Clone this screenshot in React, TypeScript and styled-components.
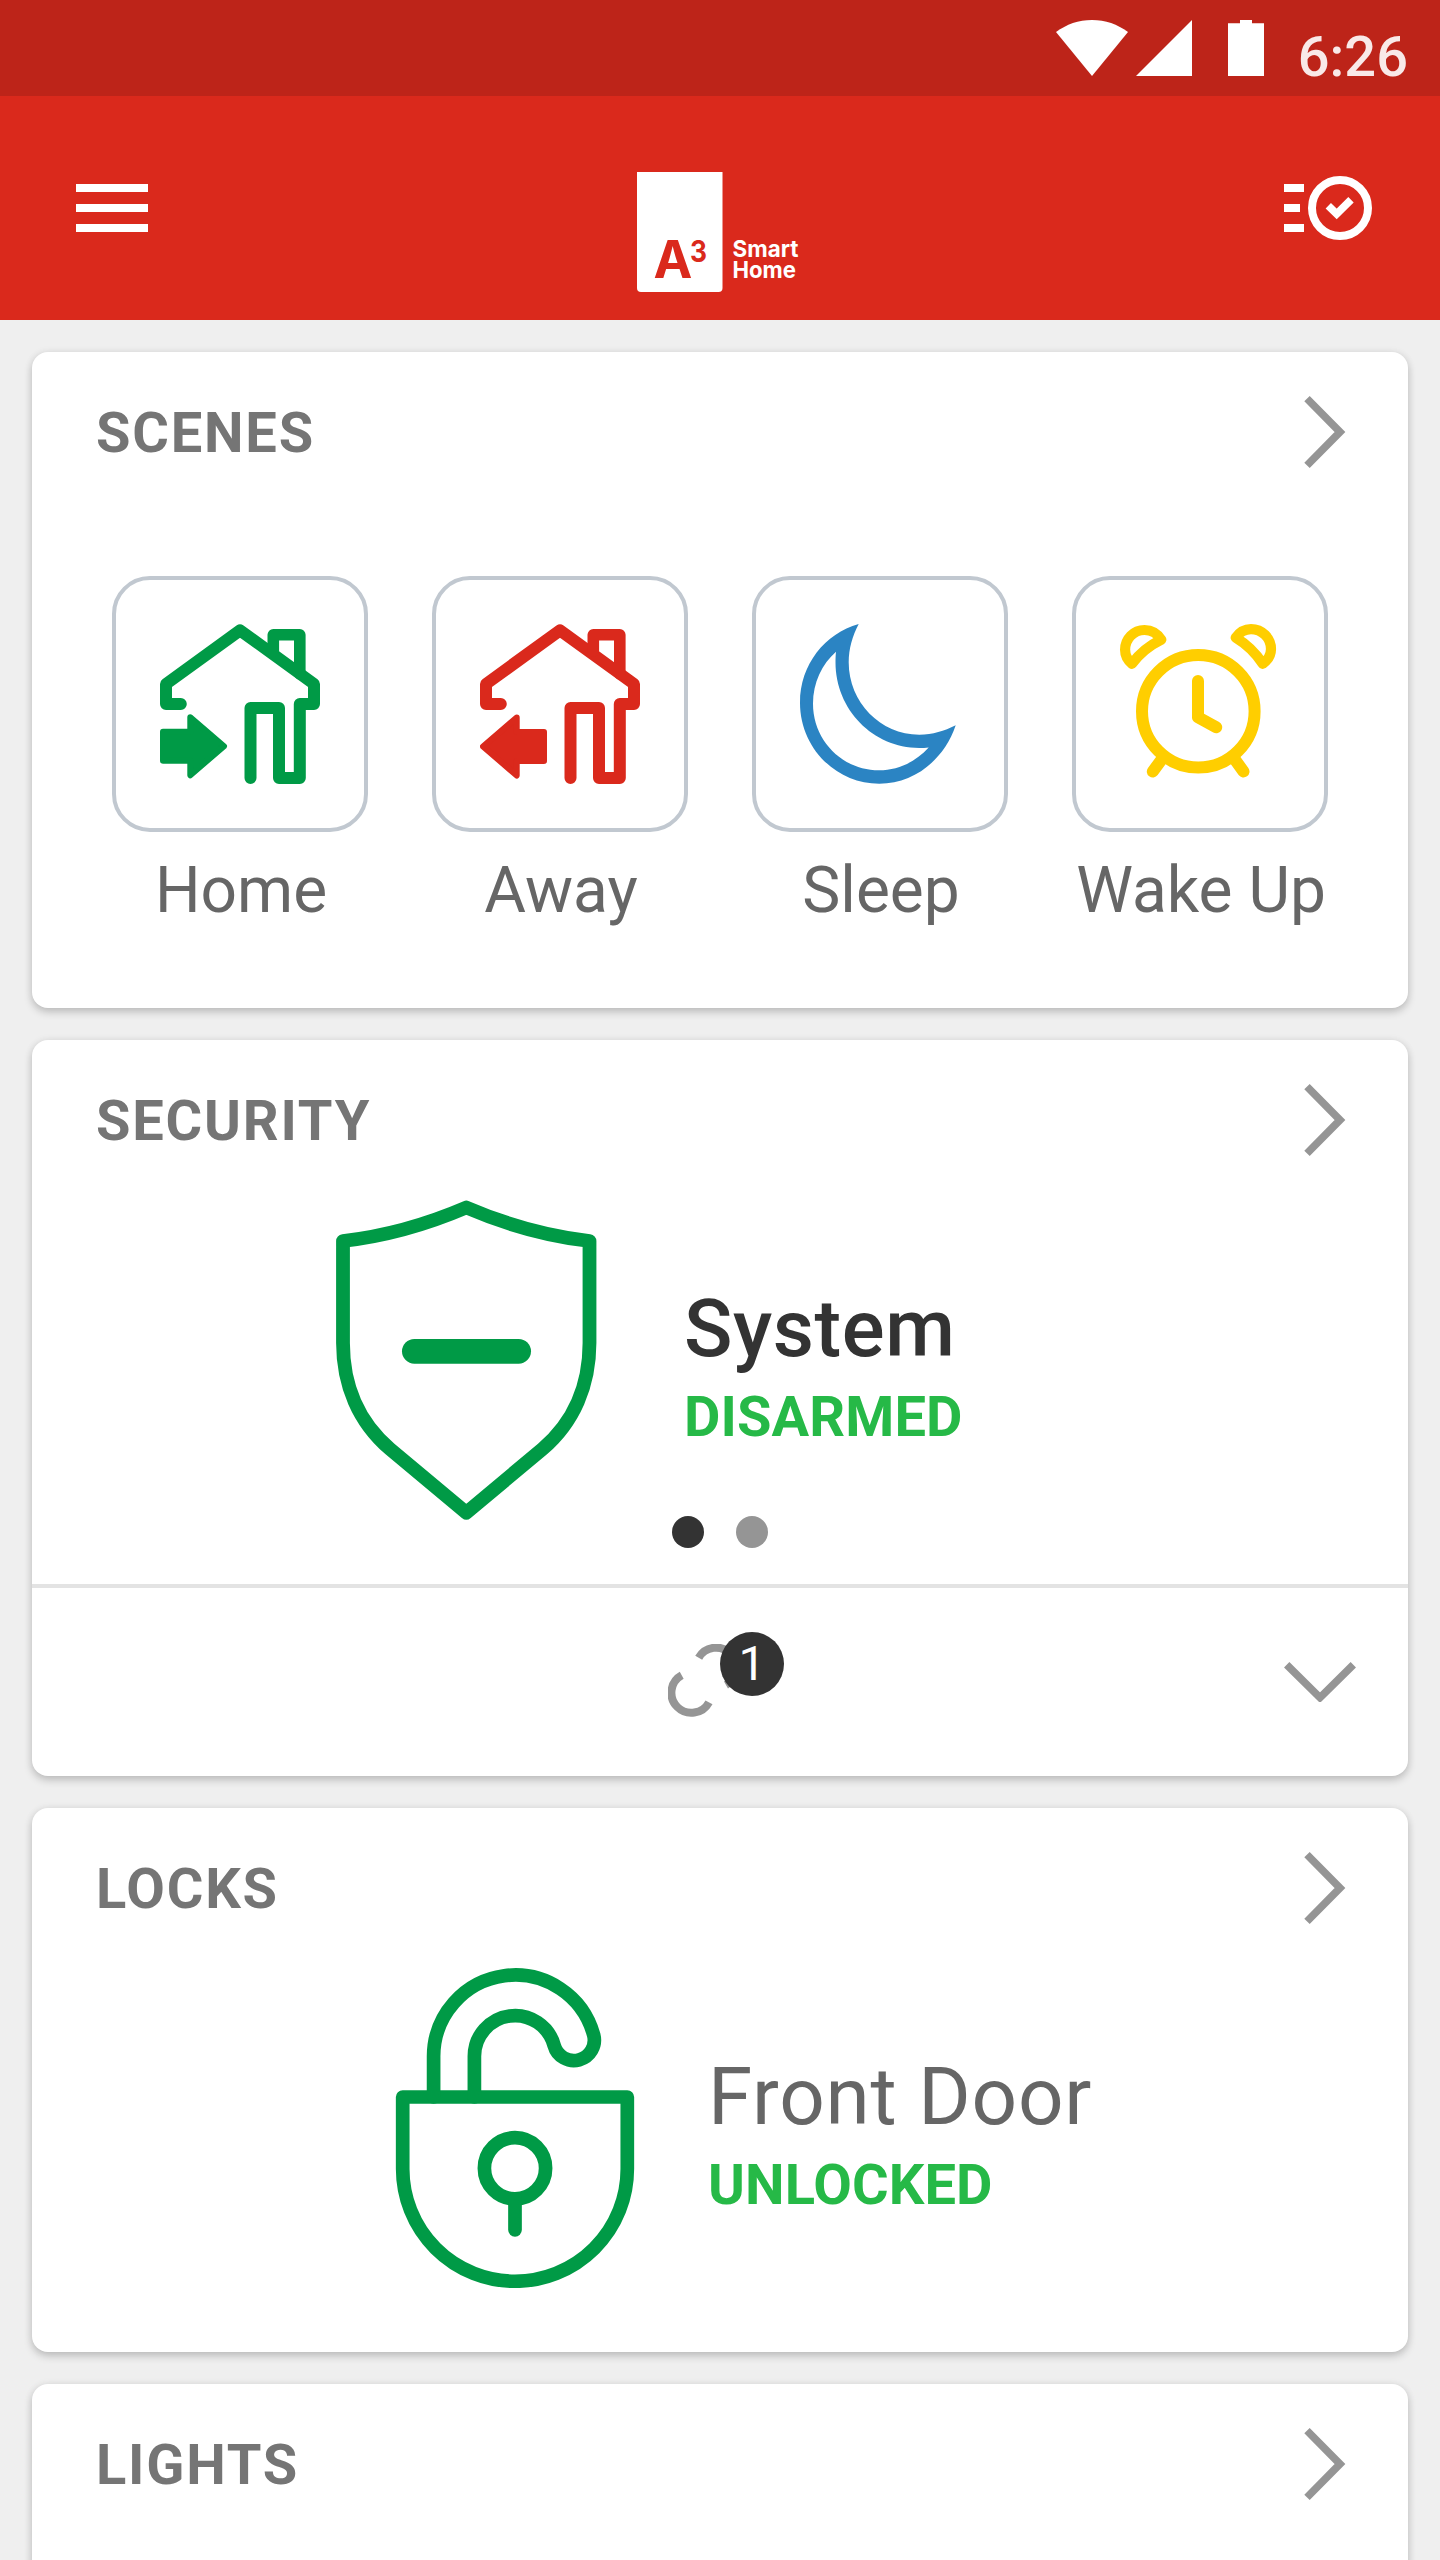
import React from 'react';
import styled, { createGlobalStyle } from 'styled-components';

const Global = createGlobalStyle`
  *, *::before, *::after { box-sizing: border-box; }
  html, body { margin: 0; padding: 0; background: #efefef; }
  svg { display: block; flex: none; }
`;

const Screen = styled.div`
  width: 1440px;
  height: 2560px;
  overflow: hidden;
  display: flex;
  flex-direction: column;
  background: #efefef;
  font-family: Roboto, 'Liberation Sans', sans-serif;
`;

const StatusBar = styled.div`
  flex: none;
  height: 96px;
  padding: 20px 32px 0 0;
  display: flex;
  justify-content: flex-end;
  align-items: flex-start;
  background: #bd2419;
`;

const Clock = styled.span`
  margin: 4px 0 0 34px;
  font-size: 56px;
  line-height: 66px;
  font-weight: 500;
  color: rgba(255, 255, 255, 0.9);
`;

const Header = styled.header`
  flex: none;
  height: 224px;
  padding: 0 68px 0 76px;
  display: flex;
  align-items: flex-start;
  background: #da291c;
`;

const HeaderButton = styled.button`
  margin: 80px 0 0;
  padding: 0;
  border: 0;
  background: none;
`;

const Brand = styled.div`
  margin: 76px auto 0 489px;
`;

const Content = styled.main`
  display: flex;
  flex-direction: column;
  gap: 32px;
  padding: 32px;
`;

const Card = styled.section<{ $height: number }>`
  flex: none;
  height: ${(p) => p.$height}px;
  display: flex;
  flex-direction: column;
  border-radius: 16px;
  background: #fff;
  box-shadow: 0 4px 8px rgba(0, 0, 0, 0.2), 0 0 8px rgba(0, 0, 0, 0.06);
`;

const CardHeader = styled.div`
  flex: none;
  height: 160px;
  padding: 0 60px 0 64px;
  display: flex;
  align-items: center;
  justify-content: space-between;
`;

const CardTitle = styled.h2`
  margin: 2px 0 0;
  font-size: 56px;
  line-height: 64px;
  font-weight: 700;
  letter-spacing: 1.8px;
  color: #757575;
`;

const SceneGrid = styled.div`
  display: grid;
  grid-template-columns: repeat(4, 256px);
  column-gap: 64px;
  padding: 64px 80px 0;
`;

const Scene = styled.div`
  display: flex;
  flex-direction: column;
  align-items: center;
`;

const SceneTile = styled.div`
  width: 256px;
  height: 256px;
  display: flex;
  align-items: center;
  justify-content: center;
  border: 4px solid #c1c8d0;
  border-radius: 38px;
`;

const SceneLabel = styled.span`
  margin-top: 21px;
  padding-left: 2px;
  font-size: 64px;
  line-height: 76px;
  white-space: nowrap;
  color: #666;
`;

const Device = styled.div<{ $inset: number }>`
  flex: none;
  height: 320px;
  display: flex;
  padding-left: ${(p) => p.$inset}px;
`;

const DeviceText = styled.div<{ $gap: number }>`
  display: flex;
  flex-direction: column;
  margin-left: ${(p) => p.$gap}px;
  padding-top: 82px;
`;

const DeviceName = styled.span<{ $strong?: boolean }>`
  font-size: 80px;
  line-height: 94px;
  letter-spacing: ${(p) => (p.$strong ? 0.6 : 0.8)}px;
  font-weight: ${(p) => (p.$strong ? 500 : 400)};
  color: ${(p) => (p.$strong ? '#333' : '#666')};
`;

const DeviceState = styled.span`
  margin-top: 8px;
  font-size: 56px;
  line-height: 66px;
  font-weight: 700;
  letter-spacing: 0.1px;
  color: #26b947;
`;

const Pager = styled.div`
  flex: none;
  height: 68px;
  display: flex;
  justify-content: center;
  gap: 32px;
  margin-top: -4px;
`;

const Dot = styled.i<{ $active?: boolean }>`
  width: 32px;
  height: 32px;
  border-radius: 50%;
  background: ${(p) => (p.$active ? '#333' : '#959595')};
`;

const CardFooter = styled.div`
  flex: 1;
  border-top: 4px solid #e3e3e3;
  display: flex;
  align-items: flex-start;
  justify-content: space-between;
  padding: 56px 52px 0 636px;
`;

const LinkStatus = styled.div`
  position: relative;
  width: 116px;
  height: 84px;
`;

const Badge = styled.span`
  position: absolute;
  left: 52px;
  top: -12px;
  width: 64px;
  height: 64px;
  border-radius: 50%;
  background: #333;
  color: #fff;
  font-size: 48px;
  line-height: 64px;
  text-align: center;
`;

const FooterChevron = styled.div`
  margin-top: 14px;
`;

const ChevronRight = () => (
  <svg width="44" height="76" viewBox="0 0 44 76" fill="none" stroke="#959595" strokeWidth="7.6">
    <path d="M3 4.7 36 38 3 71.3" />
  </svg>
);

const ChevronDown = () => (
  <svg width="72" height="44" viewBox="0 0 72 44" fill="none" stroke="#959595" strokeWidth="7.6">
    <path d="M2.7 6.7 36 39.6 69.3 6.7" />
  </svg>
);

const StatusIcons = () => (
  <svg width="208" height="56" viewBox="0 0 208 56" fill="#fff">
    <path d="M0 12C10.500 4.300 22.500 0 36 0S61.500 4.300 72 12L36 56Z" />
    <path d="M136 0V56H80Z" />
    <path d="M172 3.300H184V0H196V3.300H208V56H172Z" />
  </svg>
);

const MenuIcon = () => (
  <svg width="72" height="64" viewBox="0 0 72 64" fill="#fff">
    <path d="M0 8H72V16H0ZM0 28H72V36H0ZM0 48H72V56H0Z" />
  </svg>
);

const TasksIcon = () => (
  <svg width="88" height="64" viewBox="0 0 88 64" fill="none" stroke="#fff">
    <path d="M0 12H20M0 32H16M0 52H20" strokeWidth="8" />
    <circle cx="56" cy="32" r="28" strokeWidth="8" />
    <path d="M44.300 29.700 52.700 38 67 23.700" strokeWidth="7.600" />
  </svg>
);

const Logo = () => (
  <svg width="166" height="120" viewBox="0 0 166 120" fontFamily="Inter, sans-serif" fontWeight="700">
    <path d="M0 0H85.500V116a4 4 0 0 1-4 4H4a4 4 0 0 1-4-4Z" fill="#fff" />
    <g fill="#da291c">
      <text x="16.500" y="105.600" fontSize="52">A</text>
      <text x="53" y="90.300" fontSize="30" textLength="17" lengthAdjust="spacingAndGlyphs">3</text>
    </g>
    <text fill="#fff" fontSize="23">
      <tspan x="95.500" y="85.300" textLength="66" lengthAdjust="spacingAndGlyphs">Smart</tspan>
      <tspan x="95.500" y="105.500" textLength="63.500" lengthAdjust="spacingAndGlyphs">Home</tspan>
    </text>
  </svg>
);

const ARROW = 'M3 107.700H30.300V93.200L64 122.200 30.300 151.200V136.700H3Z';

const HouseIcon = ({ color, leaving }: { color: string; leaving?: boolean }) => (
  <svg width="160" height="160" viewBox="0 0 160 160" fill="none" stroke={color} strokeLinecap="round" strokeLinejoin="round">
    <path
      strokeWidth="12"
      d="M20.800 80H6V60L80 6.300 154 60V80H139.800V154H119V84H90.500V154"
    />
    <path strokeWidth="11.600" d="M113.300 27V10.800H139.800V50" />
    <path
      strokeWidth="6"
      fill={color}
      d={ARROW}
      transform={leaving ? 'translate(67 0.300) scale(-1 1)' : undefined}
    />
  </svg>
);

const MoonIcon = () => (
  <svg width="160" height="160" viewBox="0 0 160 160" fill="#2b84c3" fillRule="evenodd">
    <path d="M58.700 0C25 9.500 0 40.500 0 78.700 0 123.400 35.600 159.700 79.300 159.700 114 159.700 144 136 155.700 101.300 144 107 133 110.700 119.300 110.700 80.300 110.700 48.700 78.300 48.700 38.300 48.700 24.500 52.500 12 58.700 0ZM36 27.700C22 40 13 58.700 13 79.700 13 116.500 42.500 146.300 79 146.300 98.500 146.300 116 137.500 128.700 123.500 125.500 123.900 122.500 124 119.300 124 73 124 35.500 85.600 35.500 38.300 35.500 35 35.600 31 36 27.700Z" />
  </svg>
);

const AlarmIcon = () => (
  <svg width="160" height="160" viewBox="0 0 160 160" fill="none" stroke="#ffce00" strokeWidth="12" strokeLinecap="round" strokeLinejoin="round">
    <circle cx="78.300" cy="87.300" r="56.300" />
    <path d="M78 57V93.300L96.200 103.300M42 135 32.800 147.500M114.500 135 123.500 147.500" />
    <path
      strokeWidth="10.200"
      d="M12 39.800C7.500 36 5.100 31.500 5.100 25.700 5.100 14.800 13.700 6 24.500 6 31.500 6 37.500 9.700 41.300 15.700 29.500 21.500 19.500 29.500 12 39.800ZM142.700 39.800C148 36 151 30.500 151 25 151 14 142 5.100 131 5.100 125 5.100 119.500 8.300 115.700 13.700 127 20.500 136 29.500 142.700 39.800Z"
    />
  </svg>
);

const ShieldIcon = () => (
  <svg width="320" height="320" viewBox="0 0 320 320" fill="none" stroke="#009a46" strokeWidth="13.800" strokeLinejoin="round">
    <path d="M160.300 7.500Q222 34 283.500 41V143C283.500 185 268 222 236.500 249L160.300 312.700 84 249C52.500 222 37 185 37 143V41Q98.500 34 160.300 7.500Z" />
    <rect x="96" y="139" width="129" height="24.700" rx="12.350" fill="#009a46" stroke="none" />
  </svg>
);

const UnlockedIcon = () => (
  <svg width="320" height="320" viewBox="0 0 320 320" fill="none" stroke="#009a46" strokeWidth="13.700" strokeLinecap="round" strokeLinejoin="round">
    <path d="M47.700 129H272.300V201A112.300 112.300 0 0 1 47.700 201Z" />
    <path d="M78.600 129V88.200A81.500 81.500 0 0 1 238.700 67 20.450 20.450 0 0 1 199.200 77.600 40.600 40.600 0 0 0 119.400 88.200V129" />
    <circle cx="160" cy="200.300" r="30.600" />
    <path d="M160 231V261.800" />
  </svg>
);

const LinkIcon = () => (
  <svg width="84" height="84" viewBox="0 0 84 84" fill="none" stroke="#959595" strokeWidth="8">
    <path d="M13.700 31.300A20 20 0 1 0 41 58.300" />
    <path d="M30.700 13.700A20 20 0 1 1 58 41" />
  </svg>
);

const scenes = [
  { label: 'Home', icon: <HouseIcon color="#009a46" /> },
  { label: 'Away', icon: <HouseIcon color="#da291c" leaving /> },
  { label: 'Sleep', icon: <MoonIcon /> },
  { label: 'Wake Up', icon: <AlarmIcon /> },
];

const SectionHeader = ({ title }: { title: string }) => (
  <CardHeader>
    <CardTitle>{title}</CardTitle>
    <ChevronRight />
  </CardHeader>
);

export default function App() {
  return (
    <Screen>
      <Global />
      <StatusBar>
        <StatusIcons />
        <Clock>6:26</Clock>
      </StatusBar>
      <Header>
        <HeaderButton aria-label="Menu">
          <MenuIcon />
        </HeaderButton>
        <Brand>
          <Logo />
        </Brand>
        <HeaderButton aria-label="Activity">
          <TasksIcon />
        </HeaderButton>
      </Header>
      <Content>
        <Card $height={656}>
          <SectionHeader title="SCENES" />
          <SceneGrid>
            {scenes.map((s) => (
              <Scene key={s.label}>
                <SceneTile>{s.icon}</SceneTile>
                <SceneLabel>{s.label}</SceneLabel>
              </Scene>
            ))}
          </SceneGrid>
        </Card>
        <Card $height={736}>
          <SectionHeader title="SECURITY" />
          <Device $inset={274}>
            <ShieldIcon />
            <DeviceText $gap={58}>
              <DeviceName $strong>System</DeviceName>
              <DeviceState>DISARMED</DeviceState>
            </DeviceText>
          </Device>
          <Pager>
            <Dot $active />
            <Dot />
          </Pager>
          <CardFooter>
            <LinkStatus>
              <LinkIcon />
              <Badge>1</Badge>
            </LinkStatus>
            <FooterChevron>
              <ChevronDown />
            </FooterChevron>
          </CardFooter>
        </Card>
        <Card $height={544}>
          <SectionHeader title="LOCKS" />
          <Device $inset={323}>
            <UnlockedIcon />
            <DeviceText $gap={33}>
              <DeviceName>Front Door</DeviceName>
              <DeviceState>UNLOCKED</DeviceState>
            </DeviceText>
          </Device>
        </Card>
        <Card $height={544}>
          <SectionHeader title="LIGHTS" />
        </Card>
      </Content>
    </Screen>
  );
}
